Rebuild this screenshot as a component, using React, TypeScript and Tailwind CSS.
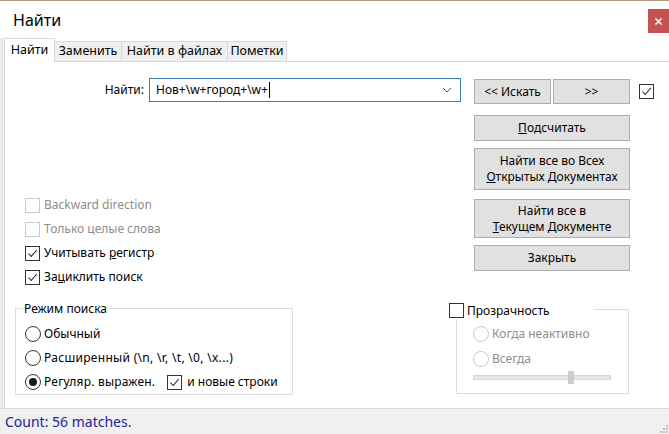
import type { ReactNode } from 'react'

function Check({ checked = false, disabled = false }: { checked?: boolean; disabled?: boolean }) {
  return (
    <span
      className={`flex h-[15px] w-[15px] shrink-0 items-center justify-center border bg-white ${
        disabled ? 'border-[#cccccc]' : 'border-[#333333]'
      }`}
    >
      {checked && (
        <svg width="13" height="13" viewBox="0 0 13 13">
          <path d="M2.5 6.5 L5.2 9.5 L10.8 3" fill="none" stroke="#222" strokeWidth="1.1" />
        </svg>
      )}
    </span>
  )
}

function Radio({ selected = false, disabled = false }: { selected?: boolean; disabled?: boolean }) {
  return (
    <span
      className={`flex h-[16px] w-[16px] shrink-0 items-center justify-center rounded-full border bg-white ${
        disabled ? 'border-[#cccccc]' : 'border-[#333333]'
      }`}
    >
      {selected && <span className="h-[8px] w-[8px] rounded-full bg-[#1a1a1a]" />}
    </span>
  )
}

function Btn({ children, className = '' }: { children: ReactNode; className?: string }) {
  return (
    <div
      className={`flex flex-col items-center justify-center border border-[#adadad] bg-[#e1e1e1] text-center leading-[16px] text-black ${className}`}
    >
      {children}
    </div>
  )
}

const tabs = [
  { label: 'Заменить', w: 'w-[67px]' },
  { label: 'Найти в файлах', w: 'w-[106px]' },
  { label: 'Пометки', w: 'w-[59px]' },
]

export default function App() {
  return (
    <div className="flex h-[434px] w-[669px] flex-col overflow-hidden bg-white font-['Noto_Sans',sans-serif] text-[12px] text-black">
      <div className="h-[1px] bg-[#b49a80]" />

      {/* title bar */}
      <div className="flex h-[37px] justify-between">
        <div className="pl-[13px] pt-[7px] text-[16px] leading-[24px]">Найти</div>
        <div className="mt-[8px] flex h-[24px] w-[21px] items-center justify-center bg-[#c75050]">
          <svg width="9" height="9" viewBox="0 0 9 9">
            <path d="M1.5 1.5 L7.5 7.5 M7.5 1.5 L1.5 7.5" stroke="#fff" strokeWidth="1.6" />
          </svg>
        </div>
      </div>

      <div className="flex h-[370px]">
        <div className="w-[4px] bg-[#ececec]" />
        <div className="flex flex-1 flex-col">
          {/* tabs */}
          <div className="flex h-[24px] items-end">
            <div className="flex h-[24px] w-[51px] items-center justify-center border-x border-t border-[#d9d9d9] bg-white pb-[1px] text-[12.5px]">
              Найти
            </div>
            {tabs.map((t) => (
              <div
                key={t.label}
                className={`flex h-[21px] ${t.w} items-center justify-center border-r border-y border-[#d9d9d9] bg-[#f0f0f0] text-[12.5px]`}
              >
                {t.label}
              </div>
            ))}
            <div className="h-[1px] flex-1 bg-[#d9d9d9]" />
          </div>

          {/* panel */}
          <div className="flex h-[346px] flex-col border-l border-[#d9d9d9]">
            <div className="flex h-[238px]">
              <div className="w-[469px]">
                <div className="mt-[16px] flex h-[24px] items-center">
                  <div className="w-[139px] text-right">Найти:</div>
                  <div className="ml-[5px] flex h-[24px] w-[312px] items-center border border-[#3c7fb0] pl-[6px] pr-[8px]">
                    <span>Нов+\w+город+\w+</span>
                    <span className="ml-[1px] h-[16px] w-[1px] bg-black" />
                    <span className="flex-1" />
                    <svg width="10" height="6" viewBox="0 0 10 6">
                      <path d="M1 1 L5 5 L9 1" fill="none" stroke="#555" strokeWidth="1" />
                    </svg>
                  </div>
                </div>

                <div className="mt-[91px] flex flex-col pl-[20px]">
                  <div className="flex h-[24px] items-center gap-[4px] text-[#8d8d8d]">
                    <Check disabled />
                    <span>Backward direction</span>
                  </div>
                  <div className="flex h-[24px] items-center gap-[4px] text-[#8d8d8d]">
                    <Check disabled />
                    <span>Только целые слова</span>
                  </div>
                  <div className="flex h-[24px] items-center gap-[4px]">
                    <Check checked />
                    <span>
                      Учитывать <span className="underline">р</span>егистр
                    </span>
                  </div>
                  <div className="flex h-[24px] items-center gap-[4px]">
                    <Check checked />
                    <span>
                      За<span className="underline">ц</span>иклить поиск
                    </span>
                  </div>
                </div>
              </div>

              <div className="flex w-[156px] flex-col pt-[17px]">
                <div className="flex gap-[2px]">
                  <Btn className="h-[25px] w-[77px]">&lt;&lt; Искать</Btn>
                  <Btn className="h-[25px] w-[77px]">&gt;&gt;</Btn>
                </div>
                <Btn className="mt-[11px] h-[26px]">
                  <span>
                    <span className="underline">П</span>одсчитать
                  </span>
                </Btn>
                <Btn className="mt-[7px] h-[42px]">
                  <span>Найти все во Всех</span>
                  <span>
                    <span className="underline">О</span>ткрытых Документах
                  </span>
                </Btn>
                <Btn className="mt-[9px] h-[39px]">
                  <span>Найти все в</span>
                  <span>
                    <span className="underline">Т</span>екущем Документе
                  </span>
                </Btn>
                <Btn className="mt-[7px] h-[26px]">Закрыть</Btn>
              </div>

              <div className="ml-[9px] pt-[22px]">
                <Check checked />
              </div>
            </div>

            <div className="flex h-[108px] items-start">
              <fieldset className="ml-[10px] w-[278px] border border-[#dcdcdc] px-[9px] pb-0">
                <legend className="ml-[-2px] px-[1px] leading-[17px]">Режим поиска</legend>
                <div className="mt-[5px] flex h-[24px] items-center gap-[3px]">
                  <Radio />
                  <span>Обычный</span>
                </div>
                <div className="flex h-[24px] items-center gap-[3px]">
                  <Radio />
                  <span className="tracking-[0.3px]">Расширенный (\n, \r, \t, \0, \x...)</span>
                </div>
                <div className="flex h-[24px] items-center gap-[3px]">
                  <Radio selected />
                  <span className="tracking-[0.2px]">Регуляр. выражен.</span>
                  <span className="ml-[9px]">
                    <Check checked />
                  </span>
                  <span className="ml-[2px]">и новые строки</span>
                </div>
              </fieldset>

              <fieldset className="ml-[163px] w-[173px] border border-[#dcdcdc] pl-[16px] pb-[8px]">
                <legend className="ml-[-24px] flex items-center gap-[3px] pr-[44px] pt-[2px] leading-[17px]">
                  <Check />
                  <span>Прозрачность</span>
                </legend>
                <div className="mt-[3px] flex h-[24px] items-center gap-[3px] text-[#8d8d8d]">
                  <Radio disabled />
                  <span>Когда неактивно</span>
                </div>
                <div className="flex h-[25px] items-center gap-[3px] text-[#8d8d8d]">
                  <Radio disabled />
                  <span>Всегда</span>
                </div>
                <div className="relative h-[14px] w-[138px]">
                  <div className="absolute left-0 right-0 top-[4px] h-[5px] border border-[#d6d6d6] bg-[#e7e7e7]" />
                  <div className="absolute left-[95px] top-0 h-[13px] w-[6px] bg-[#cdcdcd]" />
                </div>
              </fieldset>
            </div>
          </div>
        </div>
      </div>

      {/* status bar */}
      <div className="flex h-[26px] items-center justify-between border-t border-[#dadada] bg-[#f0f0f0] pl-[5px]">
        <span className="text-[14px] text-[#23239b]">Count: 56 matches.</span>
        <svg width="10" height="10" viewBox="0 0 10 10" className="mt-[12px] mr-[1px]">
          <rect x="8" y="2" width="2" height="2" fill="#bdbdbd" />
          <rect x="5" y="5" width="2" height="2" fill="#bdbdbd" />
          <rect x="8" y="5" width="2" height="2" fill="#bdbdbd" />
          <rect x="2" y="8" width="2" height="2" fill="#bdbdbd" />
          <rect x="5" y="8" width="2" height="2" fill="#bdbdbd" />
          <rect x="8" y="8" width="2" height="2" fill="#bdbdbd" />
        </svg>
      </div>
    </div>
  )
}
